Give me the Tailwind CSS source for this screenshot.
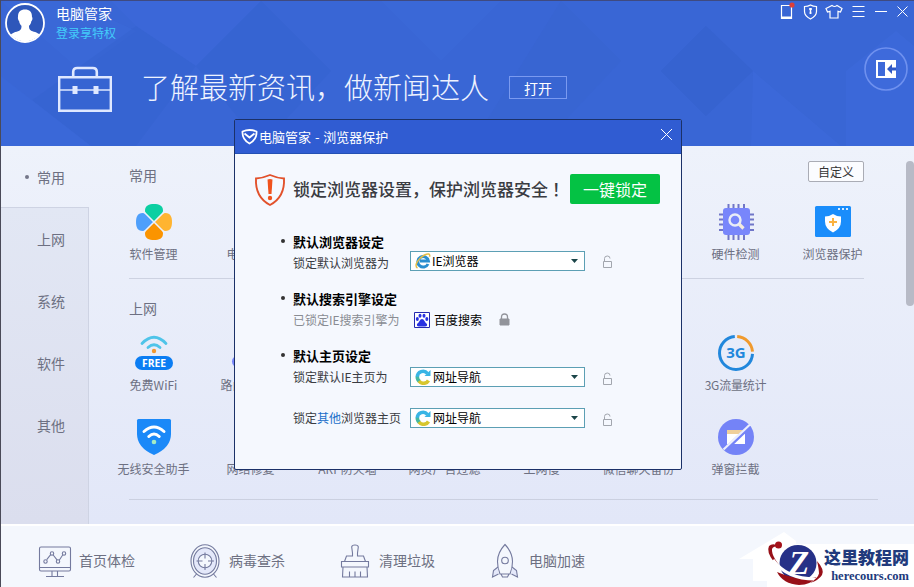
<!DOCTYPE html>
<html lang="zh-CN">
  <head>
    <meta charset="UTF-8" />
    <meta name="viewport" content="width=device-width, initial-scale=1.0" />
    <title>电脑管家</title>
    <script src="https://cdn.jsdelivr.net/npm/@tailwindcss/browser@4"></script>
  </head>
  <body class="overflow-hidden font-['Noto_Sans_CJK_SC',sans-serif] text-xs">
    <div class="relative flex h-[587px] w-[914px] flex-col overflow-hidden border-l border-[#4a4a58] bg-[#e6ebf8]">
      <!-- Header -->
      <header class="relative h-[146px] shrink-0 overflow-hidden border-t border-[#3f4a80] bg-[#3966d5]">
        <svg class="absolute inset-0 opacity-70" width="913" height="145" viewBox="0 0 913 145">
          <path d="M0 0h70l65 30-55 40z" fill="#3d6cdc" opacity=".6" />
          <path d="M135 25 195 65 260 0H110z" fill="#3d6adb" opacity=".7" />
          <path d="M135 25 195 65 135 145H60l-30-45z" fill="#3663cf" opacity=".6" />
          <path d="M0 75 90 145H0z" fill="#3b69da" />
          <path d="M260 0 330 70 260 145 195 65z" fill="#3662cf" opacity=".6" />
          <path d="M380 0h120l-60 60z" fill="#3d6adb" opacity=".6" />
          <path d="M560 0 620 60 540 145H470z" fill="#3864d1" opacity=".6" />
          <path d="M705 25 752 70 705 115 660 70z" fill="#345fca" opacity=".6" />
          <path d="M752 70 840 145H750z" fill="#3e6bdd" opacity=".7" />
          <path d="M895 30 845 70V145H913V45z" fill="#3f6cdd" opacity=".7" />
        </svg>

        <div class="relative flex h-11 items-start justify-between">
          <div class="flex gap-[11px] pt-0.5 pl-1">
            <svg width="40" height="40" viewBox="0 0 40 40">
              <defs><clipPath id="face"><circle cx="20" cy="20" r="18.5" /></clipPath></defs>
              <circle cx="20" cy="20" r="19" fill="#2e57ba" stroke="#fff" stroke-width="1.800" />
              <path clip-path="url(#face)" fill="#fff" d="M13 14c0-5.500 2.500-7.500 7-7.500s7 2 7 7.500c.8.500.5 3.500-.6 3.900-.4 3-1.700 4-2.400 4.900 0 2.200.3 4 2.200 5 3.500 1.400 7.300 1.700 9.300 5.200v8H5v-8c2-3.500 5.800-3.800 9.300-5.200 1.900-1 2.200-2.800 2.200-5-.7-.9-2-1.900-2.400-4.900-1.100-.4-1.400-3.400-1.100-3.900z" />
            </svg>
            <div class="flex flex-col">
              <span class="text-sm leading-5 text-white">电脑管家</span>
              <a class="pt-0.5 leading-4 text-[#43cdfa]">登录享特权</a>
            </div>
          </div>

          <!-- Window controls -->
          <div class="flex items-start pt-px pr-px text-white">
            <svg width="135" height="22" viewBox="0 0 135 22" fill="none" stroke="currentColor">
              <path d="M3.500 3.500h10v13h-10z" stroke-width="1.200" />
              <path d="M3 15.500h11" stroke-width="2" />
              <circle cx="14" cy="3" r="2.600" fill="#dd3e37" stroke="none" />
              <path d="M26.500 4.500q3.500 0 6-1.500 2.500 1.500 6 1.500v5q0 4.500-6 7.500-6-3-6-7.500z" stroke-width="1.200" />
              <path d="M32.500 6v6M31 7h3M31.500 11h2" stroke-width="1.500" />
              <path d="M53 3.500q2.500 2 5 0l5 3-1.500 3.500-2.500-.7v6.700h-8V9.300l-2.500.7L47 6.500z" transform="translate(1 0)" stroke-width="1.200" />
              <path d="M74.500 4.500h12M74.500 9.500h12M74.500 14.500h12M97 9.500h12M119.500 4.500l10 10M129.500 4.500l-10 10" />
            </svg>
          </div>
        </div>

        <!-- News banner -->
        <div class="relative flex items-start">
          <svg class="mt-[21px] ml-[57px]" width="54" height="47" viewBox="0 0 54 47" fill="none" stroke="#dfe8ff">
            <path d="M1.200 11.200h51.600v33.600H1.200z" stroke-width="2.400" />
            <path d="M15.200 11V6q0-4 4-4h15.600q4 0 4 4v5" stroke-width="2.600" />
            <path d="M2 24h50" stroke-width="1.500" />
            <path d="M14.500 20h5v8h-5zM35.500 20h5v8h-5z" fill="#dfe8ff" stroke="none" />
          </svg>
          <p class="mt-[20px] ml-[29px] text-[29px] leading-[42px] font-light text-[#eef3ff]">了解最新资讯，做新闻达人</p>
          <button class="mt-[31px] ml-[20px] h-[23px] w-[58px] border border-[#7a9af0] text-sm leading-[18px] text-white">打开</button>
          <svg class="mt-[1px] mr-[5px] ml-auto" width="46" height="46" viewBox="0 0 46 46">
            <circle cx="23" cy="23" r="21" fill="#4470e0" fill-opacity=".3" stroke="#6f91ef" stroke-width="1.600" />
            <path d="M13 14h20v18H13z" fill="#fff" />
            <path d="M15 16h7v14h-7z" fill="#3d69d9" />
            <path d="m24 23 5-5v3.500h4v3h-4V28z" fill="#3058c4" />
          </svg>
        </div>
      </header>

      <!-- Main -->
      <main class="flex h-[378px] shrink-0 bg-linear-to-b from-[#eef2fb] to-[#e2e7f8] text-[#6d7082]">
        <nav class="flex w-[88px] shrink-0 flex-col text-sm">
          <div class="flex h-[61px] items-center gap-2 pl-[24px]">
            <span class="size-1 rounded-full bg-[#747789]"></span>
            <span>常用</span>
          </div>
          <div class="flex-1 border-t border-r border-[#ced3e3] bg-linear-to-b from-[#e2e7f4] to-[#dbdeee]">
            <div class="flex h-[62px] items-center pl-9">上网</div>
            <div class="flex h-[62px] items-center pl-9">系统</div>
            <div class="flex h-[62px] items-center pl-9">软件</div>
            <div class="flex h-[62px] items-center pl-9">其他</div>
          </div>
        </nav>

        <section class="relative flex-1 pt-[19px]">
          <div class="flex h-5 items-center pl-10 text-sm">常用</div>
          <button class="absolute top-[15px] right-[50px] h-[21px] w-[56px] rounded-xs border border-[#aaacb5] bg-[#fbfcff] leading-[18px] text-[#333]">自定义</button>

          <div class="mt-[17px] ml-4 grid w-[776px] grid-cols-8 text-center whitespace-nowrap">
            <div class="flex flex-col items-center gap-0.5">
              <svg width="40" height="40" viewBox="0 0 40 40">
                <path d="M20 19.500c-3-2-9-6.500-9-11C11 3.500 15 2 20 2s9 1.500 9 6.500c0 4.500-6 9-9 11z" fill="#0ccfa2" />
                <path d="M20.500 20c2-3 6.500-9 11-9 5 0 6.500 4 6.500 9s-1.500 9-6.500 9c-4.500 0-9-6-11-9z" fill="#ffb430" />
                <path d="M20 20.500c3 2 9 6.500 9 11 0 5-4 6.500-9 6.500s-9-1.500-9-6.500c0-4.500 6-9 9-11z" fill="#fb9400" />
                <path d="M19.500 20c-2-3-6.500-9-11-9-5 0-6.500 4-6.500 9s1.500 9 6.500 9c4.500 0 9-6 11-9z" fill="#4e9ffb" />
                <path d="m10 10 20 20M30 10 10 30" stroke="#edf1fb" stroke-width="1.600" />
              </svg>
              <span class="leading-5">软件管理</span>
            </div>
            <div class="pt-[42px] leading-5">电脑诊所</div>
            <div class="col-start-7 flex flex-col items-center gap-0.5">
              <svg width="40" height="40" viewBox="0 0 40 40" fill="none">
                <path d="M12.500 2v36M17.500 2v36M22.500 2v36M28 2v36M3 12.500h35M3 17.500h35M3 22.500h35M3 28h35" stroke="#7076c8" stroke-width="2" />
                <rect x="7" y="6" width="27" height="27" rx="3" fill="#7886fb" />
                <circle cx="19" cy="18" r="5.500" stroke="#e9edf7" stroke-width="2.400" />
                <path d="m23 22 4.500 4.500" stroke="#f4ecdd" stroke-width="3.200" />
              </svg>
              <span class="leading-5">硬件检测</span>
            </div>
            <div class="flex flex-col items-center gap-0.5">
              <svg width="40" height="40" viewBox="0 0 40 40">
                <rect x="2" y="4" width="36" height="31" rx="1.500" fill="#1a8dfb" />
                <path d="M25 6h2v2h-2zM29 6h2v2h-2zM33 6h2v2h-2z" fill="#d9edff" />
                <path d="M20 12q4 2.500 8 2.500v5q0 7-8 11-8-4-8-11v-5q4 0 8-2.500z" fill="#fff" />
                <path d="M20 16v8M16 20h8" stroke="#fbb240" stroke-width="2" />
              </svg>
              <span class="leading-5">浏览器保护</span>
            </div>
          </div>

          <div class="mt-[14px] ml-10 h-px w-[735px] bg-[#cdd2e1]"></div>
          <div class="mt-[19px] flex h-5 items-center pl-10 text-sm">上网</div>

          <div class="mt-[15px] ml-4 grid w-[776px] grid-cols-8 gap-y-[21px] text-center whitespace-nowrap">
            <div class="flex flex-col items-center gap-[2px]">
              <svg width="40" height="40" viewBox="0 0 40 40" fill="none" stroke-linecap="round">
                <path d="M8 10.500q12-12.500 24 0" stroke="#4fc4e9" stroke-width="2.800" />
                <path d="M14 14.500q6-5.500 12 0" stroke="#4fc4e9" stroke-width="2.800" />
                <circle cx="20" cy="18" r="2.200" fill="#f39830" />
                <rect x="1" y="23" width="38" height="14" rx="7" fill="#0b7df3" />
                <text x="20" y="34" text-anchor="middle" fill="#fff" font-family="Open Sans, sans-serif" font-size="11" font-weight="700" textLength="24" lengthAdjust="spacingAndGlyphs">FREE</text>
              </svg>
              <span class="leading-5">免费WiFi</span>
            </div>
            <div class="flex flex-col items-center gap-[2px]">
              <svg width="40" height="40" viewBox="0 0 40 40"><rect x="1" y="23" width="38" height="11" rx="5.500" fill="#7886fb" /></svg>
              <span class="leading-5">路由器管理</span>
            </div>
            <div class="col-start-7 flex flex-col items-center gap-[2px]">
              <svg width="40" height="40" viewBox="0 0 40 40" fill="none" stroke-width="3">
                <path d="M18.800 3.500A16.500 16.500 0 1 0 36.500 20.800" stroke="#2187dc" />
                <path d="M21.200 3.500A16.500 16.500 0 0 1 36.500 18.600" stroke="#f09a2d" />
                <text x="20" y="25" text-anchor="middle" fill="#2187dc" stroke="none" font-family="Open Sans, sans-serif" font-size="15" font-weight="700">3G</text>
              </svg>
              <span class="leading-5 tracking-[-0.2px]">3G流量统计</span>
            </div>

            <div class="col-start-1 mt-px flex flex-col items-center gap-[2px]">
              <svg width="40" height="40" viewBox="0 0 40 40" fill="none" stroke-linecap="round">
                <path d="M4.500 2h31q1.500 0 1.500 1.500V17q0 13.500-17 21Q3 30.500 3 17V3.500Q3 2 4.500 2z" fill="#1b89f8" />
                <path d="M10 14.500q10-9 20 0" stroke="#fff" stroke-width="3" />
                <path d="M14.800 19.500q5.200-5 10.400 0" stroke="#fff" stroke-width="3" />
                <circle cx="20" cy="25" r="2.300" fill="#a5ebc4" />
              </svg>
              <span class="leading-5">无线安全助手</span>
            </div>
            <div class="pt-[43px] leading-5">网络修复</div>
            <div class="pt-[43px] leading-5">ARP防火墙</div>
            <div class="pt-[43px] leading-5">网页广告过滤</div>
            <div class="pt-[43px] leading-5">上网慢</div>
            <div class="pt-[43px] leading-5">微信聊天备份</div>
            <div class="mt-px flex flex-col items-center gap-[2px]">
              <svg width="40" height="40" viewBox="0 0 40 40">
                <circle cx="20" cy="20" r="18" fill="#7483f7" />
                <path d="M11 13h18v14H11z" fill="#fff" />
                <path d="M11 13h18v4H11z" fill="#efcf9a" />
                <path d="M34 9 9 33" stroke="#7483f7" stroke-width="4" />
                <path d="M34 7.500 7.500 32.500" stroke="#eceffd" stroke-width="2.200" />
              </svg>
              <span class="leading-5">弹窗拦截</span>
            </div>
          </div>
          <div class="mt-[20px] ml-10 h-px w-[749px] bg-[#cbd0e0]"></div>

          <div class="absolute top-[15px] right-0 h-[145px] w-2 rounded-full bg-[#b7bac6]"></div>
        </section>
      </main>

      <!-- Footer -->
      <footer class="flex h-[63px] shrink-0 border-t-2 border-white bg-[#f4f7fd] pt-[17px] pl-[36px] text-sm text-[#6d7082]">
        <div class="flex h-9 w-[151px] items-center gap-[6px]">
          <svg width="36" height="36" viewBox="0 0 36 36" fill="none" stroke="#747a9e" stroke-width="1.100">
            <rect x="2.500" y="4" width="31" height="24" rx="1.500" />
            <path d="M2.500 24.500h31M15 28v5.500M20.500 28v5.500M9 33.500h18M9.700 16.700l4-5M16.200 12l4 5.200M22.200 17.200l3.500-5.200" />
            <circle cx="8.500" cy="18.500" r="1.700" /><circle cx="15" cy="10.500" r="1.700" /><circle cx="21" cy="18.500" r="1.700" /><circle cx="27" cy="10.500" r="1.700" />
          </svg>
          <span class="mb-[3px]">首页体检</span>
        </div>
        <div class="flex h-9 w-[150px] items-center gap-[5px]">
          <svg width="36" height="36" viewBox="0 0 36 36" fill="none" stroke="#747a9e" stroke-width="1.100">
            <ellipse cx="17" cy="18" rx="14" ry="16.200" />
            <ellipse cx="17" cy="18" rx="11.500" ry="13.200" fill="#e4e8fa" />
            <circle cx="17" cy="18" r="6.800" fill="#f4f7fd" />
            <path d="M17 9.500v6M17 21v6M8.500 18h6M20 18h6M8.500 31 5.500 34.500M25.500 31l3 3.500" />
          </svg>
          <span class="mb-[3px]">病毒查杀</span>
        </div>
        <div class="flex h-9 w-[150px] items-center gap-[5px]">
          <svg width="36" height="36" viewBox="0 0 36 36" fill="none" stroke="#747a9e" stroke-width="1.100">
            <path d="M14.500 13V10l-.8-6q0-2 3.300-2t3.300 2l-.8 6v3h6l2 5.500H6.500l2-5.500z" />
            <path d="M3.500 18.500h27V24h-27zM5 24l-.5 10h25L29 24M11.500 34v-5.500M17 34v-5.500M22.500 34v-5.500" />
          </svg>
          <span class="mb-[3px]">清理垃圾</span>
        </div>
        <div class="flex h-9 items-center gap-[5px]">
          <svg width="36" height="36" viewBox="0 0 36 36" fill="none" stroke="#747a9e" stroke-width="1.100">
            <path d="M17 1.500q7.500 8 7.500 17 0 7-2.500 12.500H12Q9.500 25.500 9.500 18.500q0-9 7.500-17zM13 31l1.500 3h5L21 31" />
            <circle cx="17" cy="17.500" r="3.300" />
            <path d="m10 24-4.500 3.500-1 6.500 6-3M24 24l4.500 3.500 1 6.500-6-3" fill="#e4e8fa" />
          </svg>
          <span class="mb-[3px]">电脑加速</span>
        </div>
      </footer>

      <!-- Browser protection dialog -->
      <div class="absolute top-[119px] left-[233px] h-[351px] w-[448px] rounded-xs border border-[#1b3168] bg-[#f5f8fe] text-[#3a3c42]">
        <div class="flex h-[34px] items-center border-b border-[#2450b4] bg-[#305cd2] pl-[6px] text-[13px] text-white">
          <svg width="17" height="17" viewBox="0 0 17 17" fill="none" stroke="#fff" stroke-width="1.800">
            <path d="M1.500 3.500Q8.500.5 15.500 3.500q.5 8-7 12-7.500-4-7-12z" />
            <path d="m3.500 5.500 5 4 5-4" />
          </svg>
          <span class="ml-px">电脑管家<span class="mx-px"> - </span>浏览器保护</span>
          <svg class="mt-[-5px] mr-2 ml-auto" width="13" height="13" viewBox="0 0 13 13" stroke="#fff"><path d="m1 1 11 11M12 1 1 12" /></svg>
        </div>

        <div class="flex items-start pt-[19px] pl-[19px]">
          <svg width="32" height="34" viewBox="0 0 32 34" fill="none">
            <path d="M2 5.500Q9 5 16 2q7 3 14 3.500Q31 24 16 32 1 24 2 5.500z" stroke="#e2512b" stroke-width="1.900" />
            <path d="M13.500 6.500q2.500-1 5 0l-1 14.500h-3z" fill="#f0521d" />
            <circle cx="16" cy="25" r="2.200" fill="#f0521d" />
          </svg>
          <h2 class="ml-[7px] w-[277px] text-[17px] leading-[31px] font-medium whitespace-nowrap">锁定浏览器设置，保护浏览器安全<span class="pl-1">！</span></h2>
          <button class="mt-[1px] h-[30px] w-[90px] rounded-xs bg-[#04c244] text-base leading-[26px] text-white">一键锁定</button>
        </div>

        <!-- Default browser -->
        <div class="mt-[25px] flex h-5 items-center gap-2 pl-[46px] text-[13px] font-bold text-black">
          <span class="mb-0.5 size-1 rounded-full bg-[#333]"></span>默认浏览器设定
        </div>
        <div class="flex h-[21px] items-center pl-[58px]">
          <span class="w-[117px]">锁定默认浏览器为</span>
          <div class="mt-[-3px] flex h-5 w-[175px] items-center border border-[#5c9fb4] bg-white pr-1.5 pl-[4px] text-black">
            <svg width="16" height="16" viewBox="0 0 16 16" fill="none">
              <path d="M13 11A5.300 5.300 0 1 1 13.400 7.900H5" stroke="#2a8fd0" stroke-width="3" />
              <path d="M2.500 15C-1.500 13 3.500 5 9.500 2c3.500-1.700 6-1.500 5 1.800" stroke="#e6bd45" stroke-width="1.500" />
            </svg>
            <span class="ml-[1px]">IE浏览器</span>
            <svg class="ml-auto" width="7" height="4" viewBox="0 0 7 4"><path d="M0 0h7L3.500 4z" fill="#1b4549" /></svg>
          </div>
          <svg class="mt-[-3px] ml-[17px]" width="11" height="13" viewBox="0 0 11 13" fill="none" stroke="#a2a6ae"><path d="M1.500 6.500h8v6h-8zM2.500 6.500v-3q0-2.500 2.800-2.500T8 3.500" /></svg>
        </div>

        <!-- Search engine -->
        <div class="mt-[16px] flex h-5 items-center gap-2 pl-[46px] text-[13px] font-bold text-black">
          <span class="mb-0.5 size-1 rounded-full bg-[#333]"></span>默认搜索引擎设定
        </div>
        <div class="flex h-5 items-center pt-px pl-[58px]">
          <span class="w-[121px] text-[#898c93]">已锁定IE搜索引擎为</span>
          <svg width="16" height="16" viewBox="0 0 16 16">
            <path d="M.5.500h15v15H.5z" fill="#fff" stroke="#2429b0" />
            <g fill="#2932e1"><ellipse cx="3.300" cy="7" rx="1.500" ry="2" /><ellipse cx="6" cy="3.700" rx="1.500" ry="2" /><ellipse cx="10" cy="3.700" rx="1.500" ry="2" /><ellipse cx="12.800" cy="7" rx="1.500" ry="2" /><path d="M8 7q1.500 0 2.500 2t2.500 3q.5 2.500-2 2.500H5q-2.500 0-2-2.500 1.500-1 2.500-3T8 7z" /></g>
          </svg>
          <span class="ml-[4px] text-black">百度搜索</span>
          <svg class="ml-[17px]" width="11" height="13" viewBox="0 0 11 13" fill="none" stroke="#92949b"><path d="M1 6h9v6H1z" fill="#92949b" /><path d="M2.500 6V4q0-3 3-3t3 3v2" stroke-width="1.300" /></svg>
        </div>

        <!-- Home page -->
        <div class="mt-[17px] flex h-5 items-center gap-2 pl-[46px] text-[13px] font-bold text-black">
          <span class="mb-0.5 size-1 rounded-full bg-[#333]"></span>默认主页设定
        </div>
        <div class="flex h-[22px] items-center pl-[58px]">
          <span class="w-[117px]">锁定默认IE主页为</span>
          <div class="mt-[-1px] flex h-5 w-[175px] items-center border border-[#5c9fb4] bg-white pr-1.5 pl-[4px] text-black">
            <svg width="16" height="16" viewBox="0 0 16 16" fill="none" stroke-width="3.600">
              <path d="M12.500 4.500A5.700 5.700 0 0 0 2.300 8" stroke="#39b5e5" />
              <path d="M2.300 7.800a5.600 5.600 0 0 0 2.300 4.700" stroke="#45b9a0" />
              <path d="M4 12a5.700 5.700 0 0 0 9.500-.5" stroke="#d7c62e" />
              <path d="M15.500 1v6h-6z" fill="#39b5e5" />
            </svg>
            <span class="ml-[2px]">网址导航</span>
            <svg class="ml-auto" width="7" height="4" viewBox="0 0 7 4"><path d="M0 0h7L3.500 4z" fill="#1b4549" /></svg>
          </div>
          <svg class="mt-[2px] ml-[17px]" width="11" height="13" viewBox="0 0 11 13" fill="none" stroke="#a2a6ae"><path d="M1.500 6.500h8v6h-8zM2.500 6.500v-3q0-2.500 2.800-2.500T8 3.500" /></svg>
        </div>
        <div class="mt-[19px] flex h-[22px] items-center pl-[58px]">
          <span class="w-[117px]">锁定<a class="text-[#1a6fc9]">其他</a>浏览器主页</span>
          <div class="mt-[-1px] flex h-5 w-[175px] items-center border border-[#5c9fb4] bg-white pr-1.5 pl-[4px] text-black">
            <svg width="16" height="16" viewBox="0 0 16 16" fill="none" stroke-width="3.600">
              <path d="M12.500 4.500A5.700 5.700 0 0 0 2.300 8" stroke="#39b5e5" />
              <path d="M2.300 7.800a5.600 5.600 0 0 0 2.300 4.700" stroke="#45b9a0" />
              <path d="M4 12a5.700 5.700 0 0 0 9.500-.5" stroke="#d7c62e" />
              <path d="M15.500 1v6h-6z" fill="#39b5e5" />
            </svg>
            <span class="ml-[2px]">网址导航</span>
            <svg class="ml-auto" width="7" height="4" viewBox="0 0 7 4"><path d="M0 0h7L3.500 4z" fill="#1b4549" /></svg>
          </div>
          <svg class="mt-[2px] ml-[17px]" width="11" height="13" viewBox="0 0 11 13" fill="none" stroke="#a2a6ae"><path d="M1.500 6.500h8v6h-8zM2.500 6.500v-3q0-2.500 2.800-2.500T8 3.500" /></svg>
        </div>
      </div>

      <!-- Site badge -->
      <svg class="absolute right-0 bottom-0" width="175" height="58" viewBox="0 0 175 58">
        <path d="M0 30 45 3l12 9v14H30v26H14V30z" fill="#fff" />
        <path d="M28 15h147v43H28z" fill="#fff" />
        <ellipse cx="59" cy="34" rx="18.500" ry="18" fill="#263187" />
        <path d="M42 18q-8-5-12-1-3 6 5 16 8 9 12 11-15-16-14-24 2-4 9-2z" fill="#971018" />
        <path d="M38 43q6 12 22 13 12 0 17-8-15 5-39-5z" fill="#971018" />
        <path d="M34 31q14 19 42 19" fill="none" stroke="#fff" stroke-width="3" />
        <circle cx="39.500" cy="16" r="3.500" fill="#a5121a" />
        <path d="M78 32q8 9 5 14-3 5-12 8 8-5 9-9.500 0-4-2-12.500z" fill="#971018" />
        <text x="60" y="45" text-anchor="middle" fill="#fff" font-family="Liberation Serif, serif" font-style="italic" font-weight="700" font-size="33">Z</text>
      </svg>
      <div class="absolute right-[5px] bottom-[4px] flex flex-col items-end whitespace-nowrap text-[#213a7c]">
        <span class="h-[25px] text-[17px] leading-[25px] font-black">这里教程网</span>
        <span class="h-3.5 font-['Liberation_Serif',serif] text-[12.5px] leading-3.5 font-bold">herecours.com</span>
      </div>
    </div>
  </body>
</html>
